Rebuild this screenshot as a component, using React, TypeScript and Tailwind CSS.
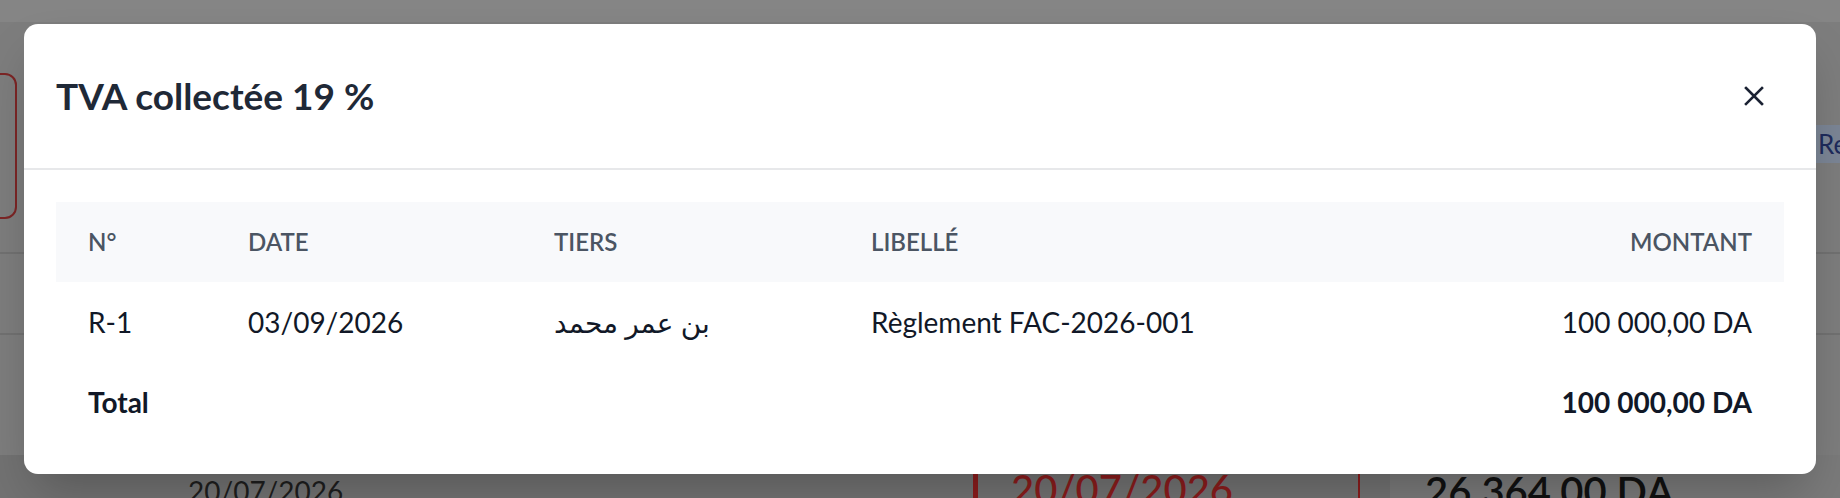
import { useState } from "react";

const rows = [
  {
    num: "R-1",
    date: "03/09/2026",
    tiers: "بن عمر محمد",
    libelle: "Règlement FAC-2026-001",
    montant: "100\u202F000,00 DA",
  },
];

function CloseIcon() {
  return (
    <svg width="20" height="20" viewBox="0 0 20 20" fill="none">
      <path
        d="M2 2L18 18M18 2L2 18"
        stroke="#1b2233"
        strokeWidth="2.6"
        strokeLinecap="square"
      />
    </svg>
  );
}

function Backdrop() {
  return (
    <div className="flex flex-col h-[498px] bg-[#7d7d7d]">
      <div className="h-[22px] bg-[#858585] shrink-0" />
      <div className="flex h-[230px] shrink-0">
        <div className="ml-[-24px] mt-[51px] w-[41px] h-[146px] border-2 border-[#7c2525] rounded-[12px]" />
        <div className="ml-auto mt-[103px] h-[38px] w-[70px] bg-[#7b8595] pl-[48px] flex items-center text-[26px] text-[#1e2b5c]">
          Re
        </div>
      </div>
      <div className="h-[81px] border-t-2 border-[#717171] shrink-0" />
      <div className="h-[122px] border-t-2 border-[#717171] shrink-0" />
      <div className="flex flex-1 bg-[#727272]">
        <div className="w-[960px] pl-[188px] pt-[22px] text-[28px] leading-none text-[#1e1e1e]">
          20/07/2026
        </div>
        <div className="flex w-[400px] border-r-2 border-[#8a1c1c]">
          <div className="ml-[13px] w-[5px] bg-[#8a1c1c]" />
          <div className="pl-[33px] pt-[14px] text-[40px] font-medium leading-none text-[#8a1c1c]">
            20/07/2026
          </div>
        </div>
        <div className="ml-[30px] flex-1 bg-[#7a7a7a] pl-[35px] pt-[16px] text-[40px] font-semibold leading-none text-[#111]">
          26{"\u202F"}364,00 DA
        </div>
      </div>
    </div>
  );
}

export default function App() {
  const [open] = useState(true);
  return (
    <div
      className="relative h-[498px] w-full overflow-hidden"
      style={{ fontFamily: "Lato, 'DejaVu Sans', sans-serif" }}
    >
      <Backdrop />
      {open && (
        <div className="absolute inset-0 px-6 pt-6">
          <div className="bg-white rounded-[14px] shadow-2xl">
            <div className="flex items-center justify-between h-[146px] pl-8 pr-[42px] border-b-2 border-[#e7e8ea]">
              <h2 className="text-[37px] font-bold text-[#1f2937]">
                TVA collectée 19 %
              </h2>
              <button className="w-10 h-10 flex items-center justify-center">
                <CloseIcon />
              </button>
            </div>
            <div className="px-8 pt-8 pb-8">
              <table className="w-full table-fixed border-collapse">
                <thead>
                  <tr className="bg-[#f8f9fb] h-[80px] text-left text-[24px] font-semibold uppercase text-[#4b5563]">
                    <th className="w-[160px] px-8 font-semibold">N°</th>
                    <th className="w-[306px] px-8 font-semibold">Date</th>
                    <th className="w-[317px] px-8 font-semibold">Tiers</th>
                    <th className="px-8 font-semibold">Libellé</th>
                    <th className="w-[320px] px-8 text-right font-semibold">Montant</th>
                  </tr>
                </thead>
                <tbody className="text-[28px] text-[#111827]">
                  {rows.map((r) => (
                    <tr key={r.num} className="h-[80px]">
                      <td className="px-8">{r.num}</td>
                      <td className="px-8">{r.date}</td>
                      <td className="px-8">{r.tiers}</td>
                      <td className="px-8">{r.libelle}</td>
                      <td className="px-8 text-right">{r.montant}</td>
                    </tr>
                  ))}
                  <tr className="h-[80px] font-bold">
                    <td className="px-8">Total</td>
                    <td />
                    <td />
                    <td />
                    <td className="px-8 text-right">100{"\u202F"}000,00 DA</td>
                  </tr>
                </tbody>
              </table>
            </div>
          </div>
        </div>
      )}
    </div>
  );
}
